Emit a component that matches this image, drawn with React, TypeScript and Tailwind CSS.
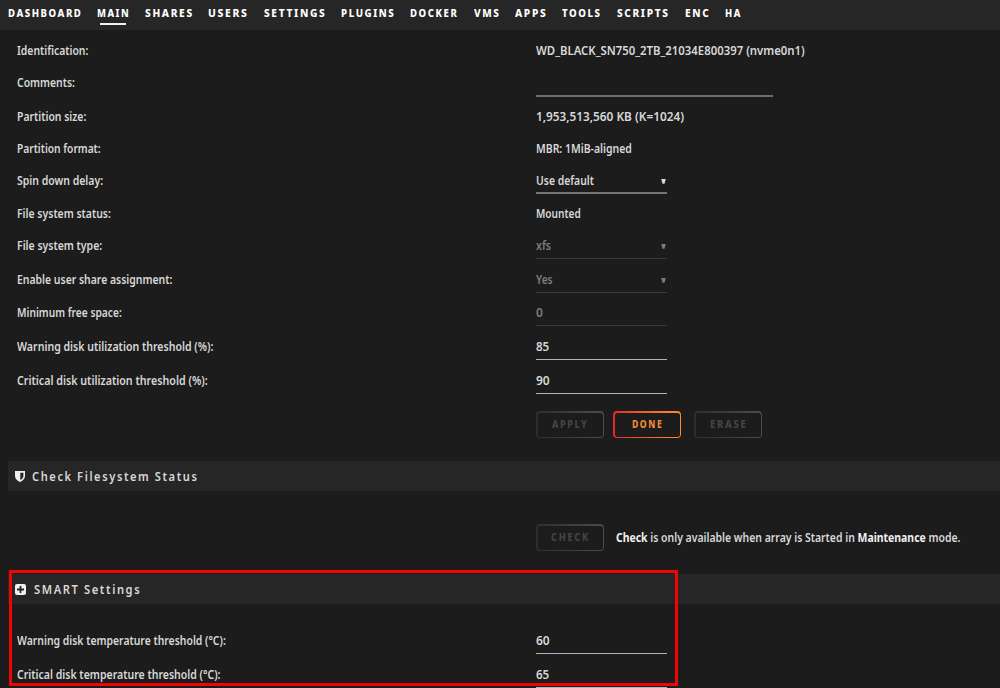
import { useLayoutEffect, useRef, useState, type ReactNode } from 'react';

/** Single line of text condensed or widened to a given width. */
function Fit({ w, children, className = '' }: { w: number; children: ReactNode; className?: string }) {
  const ref = useRef<HTMLSpanElement>(null);
  const [scale, setScale] = useState(1);
  useLayoutEffect(() => {
    if (ref.current) setScale(w / ref.current.offsetWidth);
  }, [w]);
  return (
    <span className="inline-block shrink-0 text-left" style={{ width: w }}>
      <span
        ref={ref}
        className={`inline-block origin-left whitespace-nowrap ${className}`}
        style={{ transform: `scaleX(${scale})` }}
      >
        {children}
      </span>
    </span>
  );
}

const nav: [string, number][] = [
  ['DASHBOARD', 74], ['MAIN', 33], ['SHARES', 48.5], ['USERS', 40.5], ['SETTINGS', 62], ['PLUGINS', 54.5],
  ['DOCKER', 48.5], ['VMS', 26.5], ['APPS', 32], ['TOOLS', 39.5], ['SCRIPTS', 53], ['ENC', 25], ['HA', 17],
];

function Row({ label, w, h, children }: { label: string; w: number; h: string; children?: ReactNode }) {
  return (
    <div className={`flex shrink-0 items-start ${h}`}>
      <div className="w-[519px] shrink-0 leading-[34px]">
        <Fit w={w}>{label}</Fit>
      </div>
      {children}
    </div>
  );
}

function Value({ w, children }: { w: number; children: ReactNode }) {
  return (
    <div className="leading-[34px]">
      <Fit w={w}>{children}</Fit>
    </div>
  );
}

function Field({ w, text, size, arrow }: { w: number; text: string; size: string; arrow?: boolean }) {
  return (
    <div className={`flex w-[131px] justify-between leading-[34px] ${size}`}>
      <Fit w={w}>{text}</Fit>
      {arrow && (
        <svg className="mt-[15px] mr-px h-[5px] w-[5px]" viewBox="0 0 5 5" fill="currentColor">
          <path d="M.2 0h4.600L3.500 4.800H1.500z" />
        </svg>
      )}
    </div>
  );
}

function Button({ text, w, active }: { text: string; w: number; active?: boolean }) {
  return (
    <div
      className={`h-[27px] w-[68px] rounded-[4px] p-[1.5px] ${
        active ? 'bg-gradient-to-r from-[#e22828] to-[#ff8c2f]' : 'bg-gradient-to-r from-[#2e2e2e] to-[#4c4c4c]'
      }`}
    >
      <div
        className={`flex h-full items-center justify-center rounded-[2.5px] bg-[#1c1c1c] text-[10px] font-extrabold ${
          active ? 'text-[#f08a34]' : 'text-[#444444]'
        }`}
      >
        <Fit w={w} className="tracking-[1.8px]">{text}</Fit>
      </div>
    </div>
  );
}

function Title({ icon, text, w }: { icon: ReactNode; text: string; w: number }) {
  return (
    <div className="ml-2 flex h-[30px] shrink-0 items-center bg-[#262626] pl-[7px] text-[12.5px] font-semibold">
      {icon}
      <div className="pt-[2px]">
        <Fit w={w} className="tracking-[1.8px]">{text}</Fit>
      </div>
    </div>
  );
}

const on = 'border-[#b4b4b4] border-b';
const off = 'border-[#3a3a3a] border-b text-[#7c7c7c]';

export default function App() {
  return (
    <div className="relative flex h-[688px] w-[1000px] flex-col overflow-hidden bg-[#1c1c1c] font-['Noto_Sans',sans-serif] text-[12px] font-semibold text-[#d8d8d8]">
      <nav className="flex h-[30px] shrink-0 gap-[15px] bg-[#262626] pl-[7.5px] text-[10.5px] leading-[27px] font-extrabold text-white">
        {nav.map(([t, w]) => (
          <div key={t} className="flex flex-col items-center">
            <Fit w={w} className="tracking-[1.7px]">{t}</Fit>
            {t === 'MAIN' && <div className="-mt-1 h-[2px] w-[26px] bg-[#f2f2f2]" />}
          </div>
        ))}
      </nav>

      <main className="flex h-[377px] shrink-0 flex-col pt-[4px] pl-[17px]">
        <Row label="Identification:" w={71} h="h-[32px]"><Value w={269}>WD_BLACK_SN750_2TB_21034E800397 (nvme0n1)</Value></Row>
        <Row label="Comments:" w={58} h="h-[34px]"><div className="h-[31px] w-[237px] border-b-2 border-[#6c6c6c]" /></Row>
        <Row label="Partition size:" w={69.5} h="h-[32px]"><Value w={147.5}>1,953,513,560 KB (K=1024)</Value></Row>
        <Row label="Partition format:" w={83.5} h="h-[32px]"><Value w={96}>MBR: 1MiB-aligned</Value></Row>
        <Row label="Spin down delay:" w={86.5} h="h-[33px]"><Field w={58} text="Use default" arrow size="h-[30px] border-b-2 border-[#747474]" /></Row>
        <Row label="File system status:" w={94} h="h-[32px]"><Value w={44.5}>Mounted</Value></Row>
        <Row label="File system type:" w={85.5} h="h-[34px]"><Field w={15} text="xfs" arrow size={`h-[30px] ${off}`} /></Row>
        <Row label="Enable user share assignment:" w={155.5} h="h-[33px]"><Field w={17} text="Yes" arrow size={`h-[30px] ${off}`} /></Row>
        <Row label="Minimum free space:" w={105} h="h-[34px]"><Field w={7} text="0" size={`h-[30px] ${off}`} /></Row>
        <Row label="Warning disk utilization threshold (%):" w={196.5} h="h-[34px]"><Field w={13.5} text="85" size={`h-[30px] ${on}`} /></Row>
        <Row label="Critical disk utilization threshold (%):" w={190.5} h="h-[34px]"><Field w={14} text="90" size={`h-[30px] ${on}`} /></Row>
      </main>

      <div className="flex h-[54px] shrink-0 pt-1 pl-[536px]">
        <Button text="APPLY" w={36} />
        <div className="ml-[9px]"><Button text="DONE" w={31} active /></div>
        <div className="ml-[13px]"><Button text="ERASE" w={37} /></div>
      </div>

      <Title
        text="Check Filesystem Status"
        w={166.5}
        icon={
          <svg className="mr-[7px] h-[11px] w-[10px]" viewBox="0 0 10 11">
            <path d="M0 0h10v4.800C10 8 7.800 9.800 5 11 2.200 9.800 0 8 0 4.800z" fill="#f0f0f0" />
            <path d="M5.300 1.700h3.100v3.200c0 1.800-1.300 3.100-3.100 4z" fill="#262626" />
          </svg>
        }
      />

      <div className="flex h-[83px] shrink-0 pt-[33px] pl-[536px]">
        <Button text="CHECK" w={39} />
        <div className="ml-[12px] leading-[27px]">
          <Fit w={344.5}>
            <b className="font-bold text-[#f0f0f0]">Check</b> is only available when array is Started in{' '}
            <b className="font-bold text-[#f0f0f0]">Maintenance</b> mode.
          </Fit>
        </div>
      </div>

      <Title
        text="SMART Settings"
        w={107}
        icon={
          <svg className="mr-[8px] h-[11px] w-[11px]" viewBox="0 0 11 11">
            <rect width="11" height="11" rx="2" fill="#f0f0f0" />
            <path d="M4.600 2h1.800v2.600H9v1.800H6.400V9H4.600V6.400H2V4.600h2.600z" fill="#262626" />
          </svg>
        }
      />

      <div className="flex flex-col pt-[20px] pl-[17px]">
        <Row label="Warning disk temperature threshold (°C):" w={209} h="h-[34px]"><Field w={14} text="60" size={`h-[30px] ${on}`} /></Row>
        <Row label="Critical disk temperature threshold (°C):" w={203.5} h="h-[34px]"><Field w={13.5} text="65" size={`h-[30px] ${on}`} /></Row>
      </div>

      <div className="absolute top-[570px] left-[9px] h-[116px] w-[669px] border-3 border-[#f00505]" />
    </div>
  );
}
